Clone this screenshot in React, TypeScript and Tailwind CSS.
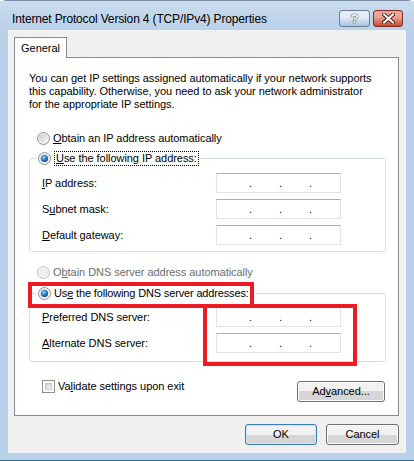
import React from "react";

const Radio = ({ checked = false, disabled = false }: { checked?: boolean; disabled?: boolean }) => (
  <svg width="13" height="13" viewBox="0 0 13 13" className="shrink-0">
    <defs>
      <linearGradient id="rb-bg" x1="0" y1="0" x2="1" y2="1">
        <stop offset="0" stopColor="#c9c9c9" />
        <stop offset="1" stopColor="#f7f7f7" />
      </linearGradient>
      <radialGradient id="rb-dot" cx="0.4" cy="0.35" r="0.7">
        <stop offset="0" stopColor="#9ad6f8" />
        <stop offset="0.5" stopColor="#2a86c9" />
        <stop offset="1" stopColor="#0d3c74" />
      </radialGradient>
    </defs>
    <circle cx="6.5" cy="6.5" r="6" fill="#f4f4f4" stroke={disabled ? "#c2c2c2" : "#8e8f8f"} />
    <circle cx="6.5" cy="6.5" r="4.5" fill={disabled ? "#eeeeee" : "url(#rb-bg)"} />
    {checked && <circle cx="6.5" cy="6.5" r="3.5" fill="url(#rb-dot)" />}
  </svg>
);

const IpBox = () => (
  <div className="flex h-[20px] w-[125px] shrink-0 items-center border border-[#e2e3ea] border-t-[#abadb3] bg-white pl-[32px] leading-[13px]">
    <span className="w-[30px]">.</span>
    <span className="w-[30px]">.</span>
    <span className="w-[30px]">.</span>
  </div>
);

const Field = ({ children }: { children: React.ReactNode }) => (
  <div className="flex items-center">
    <span className="w-[174px] leading-[13px]">{children}</span>
    <IpBox />
  </div>
);

const WinButton = ({ children, def = false, className = "" }: { children: React.ReactNode; def?: boolean; className?: string }) => (
  <div
    className={
      "flex h-[21px] items-center justify-center rounded-[3px] border bg-gradient-to-b from-[#f2f2f2] from-50% to-[#d6d6d6] to-50% leading-[13px] " +
      (def ? "border-[#3c7fb1] shadow-[inset_0_0_0_1px_#c3e6f8]" : "border-[#707070] shadow-[inset_0_0_0_1px_#fcfcfc]") +
      " " +
      className
    }
  >
    {children}
  </div>
);

export default function App() {
  return (
    <div className="flex h-[461px] w-[414px] flex-col rounded-t-[6px] border-t border-b border-t-[#7d90a6] border-b-[#2a6f87] bg-[#bad1ea] font-['Liberation_Sans',Arial,sans-serif] text-[11px] tracking-[-0.05px] text-black">
      {/* title bar */}
      <div className="flex h-[29px] shrink-0 items-start bg-gradient-to-b from-[#c9dcef] to-[#bad1ea] pl-[12px] pt-[9px]">
        <span className="mt-[1px] text-[12px] leading-[16px] tracking-[-0.15px] text-black">Internet Protocol Version 4 (TCP/IPv4) Properties</span>
        <div className="ml-auto mr-[11px] flex gap-[3px]">
          <div className="flex h-[17px] w-[31px] items-center justify-center rounded-[3px] border border-[#6b7d94] bg-gradient-to-b from-[#e4edf7] from-40% to-[#a9c2df] text-[13px] font-bold leading-[13px] text-white [text-shadow:0_0_1px_#33475e,0_0_1px_#33475e,0_0_1px_#33475e]">
            ?
          </div>
          <div className="flex h-[17px] w-[30px] items-center justify-center rounded-[3px] border border-[#7e2f24] bg-gradient-to-b from-[#eba495] from-40% to-[#c5452f]">
            <svg width="13" height="11" viewBox="0 0 13 11">
              <path d="M2 1.5 L11 9.5 M11 1.5 L2 9.5" stroke="#5a2218" strokeWidth="4" strokeLinecap="square" />
              <path d="M2 1.5 L11 9.5 M11 1.5 L2 9.5" stroke="#ffffff" strokeWidth="2" strokeLinecap="square" />
            </svg>
          </div>
        </div>
      </div>

      {/* client area */}
      <div className="mx-[8px] flex h-[423px] flex-col bg-[#f0f0f0] pl-[6px] pr-[7px] pt-[7px]">
        <div className="relative z-10 -mb-px flex h-[21px] w-[53px] items-center justify-center border border-b-0 border-[#898c95] bg-white leading-[13px]">
          General
        </div>

        <div className="relative flex h-[359px] flex-col border border-[#898c95] bg-white">
          <p className="ml-[14px] mt-[14px] leading-[13px]">
            You can get IP settings assigned automatically if your network supports
            <br />
            this capability. Otherwise, you need to ask your network administrator
            <br />
            for the appropriate IP settings.
          </p>

          <div className="ml-[22px] mt-[19px] flex h-[16px] items-center gap-[3px]">
            <Radio />
            <span className="leading-[13px]">
              <span className="underline">O</span>btain an IP address automatically
            </span>
          </div>

          <fieldset className="ml-[14px] mt-[4px] w-[357px] rounded-[3px] border border-[#d5dfe5]">
            <legend className="ml-[7px] flex h-[16px] items-center gap-[3px] pl-[1px]">
              <Radio checked />
              <span className="border border-dotted border-black px-px leading-[13px]">
                <span className="underline">U</span>se the following IP address:
              </span>
            </legend>
            <div className="flex flex-col gap-[6px] pb-[6px] pl-[12px] pt-[7px]">
              <Field>
                <span className="underline">I</span>P address:
              </Field>
              <Field>
                S<span className="underline">u</span>bnet mask:
              </Field>
              <Field>
                <span className="underline">D</span>efault gateway:
              </Field>
            </div>
          </fieldset>

          <div className="ml-[22px] mt-[12px] flex h-[16px] items-center gap-[3px] text-[#6d6d6d]">
            <Radio disabled />
            <span className="leading-[13px]">
              O<span className="underline">b</span>tain DNS server address automatically
            </span>
          </div>

          <fieldset className="ml-[14px] mt-[5px] w-[357px] rounded-[3px] border border-[#d5dfe5]">
            <legend className="ml-[7px] flex h-[16px] items-center gap-[3px] pl-[1px] pr-[6px]">
              <Radio checked />
              <span className="leading-[13px] tracking-[-0.15px]">
                Us<span className="underline">e</span> the following DNS server addresses:
              </span>
            </legend>
            <div className="flex flex-col gap-[6px] pb-[8px] pl-[12px] pt-[6px]">
              <Field>
                <span className="underline">P</span>referred DNS server:
              </Field>
              <Field>
                <span className="underline">A</span>lternate DNS server:
              </Field>
            </div>
          </fieldset>

          <div className="mt-[18px] flex items-start pl-[27px] pr-[13px]">
            <div className="flex h-[13px] items-center gap-[3px]">
              <div className="h-[13px] w-[13px] border border-[#8e8f8f] bg-white p-[2px]">
                <div className="h-full w-full border border-[#c5c5c5] bg-gradient-to-br from-[#d0d0d0] to-[#f6f6f6]" />
              </div>
              <span className="leading-[13px]">
                Va<span className="underline">l</span>idate settings upon exit
              </span>
            </div>
            <WinButton className="ml-auto mt-[1px] w-[88px]">
              Ad<span className="underline">v</span>anced...
            </WinButton>
          </div>

          {/* annotation boxes */}
          <div className="absolute left-[13px] top-[224px] h-[26px] w-[226px] border-[4px] border-[#ed1c24]" />
          <div className="absolute left-[188px] top-[246px] h-[62px] w-[154px] border-[4px] border-[#ed1c24]" />
        </div>

        <div className="mt-[8px] flex justify-end gap-[9px]">
          <WinButton def className="w-[72px]">
            OK
          </WinButton>
          <WinButton className="w-[73px]">Cancel</WinButton>
        </div>
      </div>
    </div>
  );
}
